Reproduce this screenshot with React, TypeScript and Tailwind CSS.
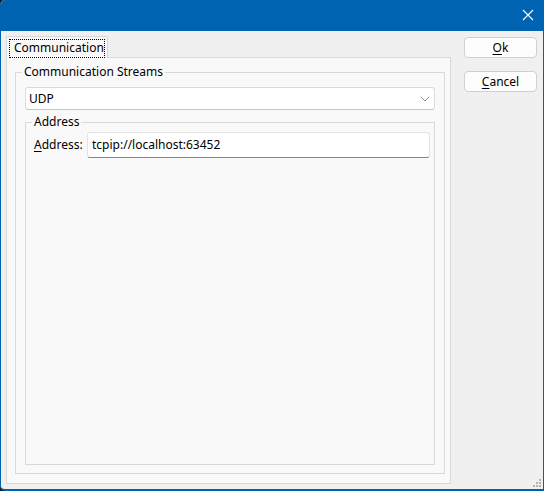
import { ChevronDown } from 'lucide-react';

function Underlined({ first, rest }: { first: string; rest: string }) {
  return (
    <>
      <span className="underline underline-offset-2">{first}</span>
      {rest}
    </>
  );
}

export default function App() {
  return (
    <div className="h-[491px] w-[544px] bg-[#1c1c1c] font-['Noto_Sans',sans-serif] text-[12px] text-black">
      <div className="relative flex h-full flex-col overflow-hidden rounded-l-[5px] border-x border-b-2 border-[#0063b1] bg-[#f0f0f0]">
        <div className="flex h-[31px] shrink-0 items-center justify-end bg-[#0063b1] pr-[9px]">
          <svg width="12" height="12" viewBox="0 0 12 12" className="mb-[2px]">
            <path d="M1 1 L11 11 M11 1 L1 11" stroke="#ffffff" strokeWidth="1.1" />
          </svg>
        </div>

        <div className="flex min-h-0 flex-1 gap-[13px] pb-[5px] pl-[5px] pr-[6px] pt-[5px]">
          <div className="flex w-[445px] flex-col">
            <div className="flex">
              <div className="relative z-10 -mb-px flex h-[22px] w-[102px] items-stretch border border-b-0 border-[#d9d9d9] bg-[#f9f9f9] px-[2px] pt-[2px]">
                <div className="flex flex-1 items-center border border-dotted border-black pl-[4px] pb-[1px]">
                  Communication
                </div>
              </div>
            </div>

            <div className="flex min-h-0 flex-1 flex-col border border-[#d9d9d9] bg-[#f9f9f9] pb-[9px] pl-[8px] pr-[5px] pt-[6px]">
              <fieldset className="flex min-h-0 flex-1 flex-col border border-[#d9d9d9] px-[9px] pb-[8px]">
                <legend className="-ml-[3px] px-[2px] leading-[16px]">Communication Streams</legend>

                <div className="mt-[7px] flex h-[23px] items-center justify-between rounded-[3px] border border-[#dadada] border-b-[#c4c4c4] bg-white pl-[3px] pr-[1px]">
                  <span>UDP</span>
                  <ChevronDown size={16} strokeWidth={1} color="#5a5a5a" />
                </div>

                <fieldset className="mt-[4px] flex min-h-0 flex-1 flex-col border border-[#d9d9d9] pl-[8px] pr-[4px]">
                  <legend className="-ml-[2px] px-[2px] leading-[16px]">Address</legend>
                  <div className="mt-[2px] flex items-center">
                    <span className="w-[53px]">
                      <Underlined first="A" rest="ddress:" />
                    </span>
                    <div className="flex h-[26px] flex-1 items-center rounded-[3px] border border-[#e3e3e3] border-b-[#858585] bg-white pl-[4px] pb-[1px]">
                      tcpip://localhost:63452
                    </div>
                  </div>
                </fieldset>
              </fieldset>
            </div>
          </div>

          <div className="flex flex-col gap-[13px] pt-[1px]">
            <button
              type="button"
              className="flex h-[21px] w-[73px] items-center justify-center rounded-[4px] border border-[#d0d0d0] bg-[#fdfdfd]"
            >
              <Underlined first="O" rest="k" />
            </button>
            <button
              type="button"
              className="flex h-[21px] w-[73px] items-center justify-center rounded-[4px] border border-[#d0d0d0] bg-[#fdfdfd]"
            >
              <Underlined first="C" rest="ancel" />
            </button>
          </div>
        </div>

        <svg width="10" height="10" viewBox="0 0 10 10" className="absolute bottom-[1px] right-[1px]">
          <rect x="7" y="1" width="2" height="2" fill="#b4b4b4" />
          <rect x="4" y="4" width="2" height="2" fill="#b4b4b4" />
          <rect x="7" y="4" width="2" height="2" fill="#b4b4b4" />
          <rect x="1" y="7" width="2" height="2" fill="#b4b4b4" />
          <rect x="4" y="7" width="2" height="2" fill="#b4b4b4" />
          <rect x="7" y="7" width="2" height="2" fill="#b4b4b4" />
        </svg>
      </div>
    </div>
  );
}
